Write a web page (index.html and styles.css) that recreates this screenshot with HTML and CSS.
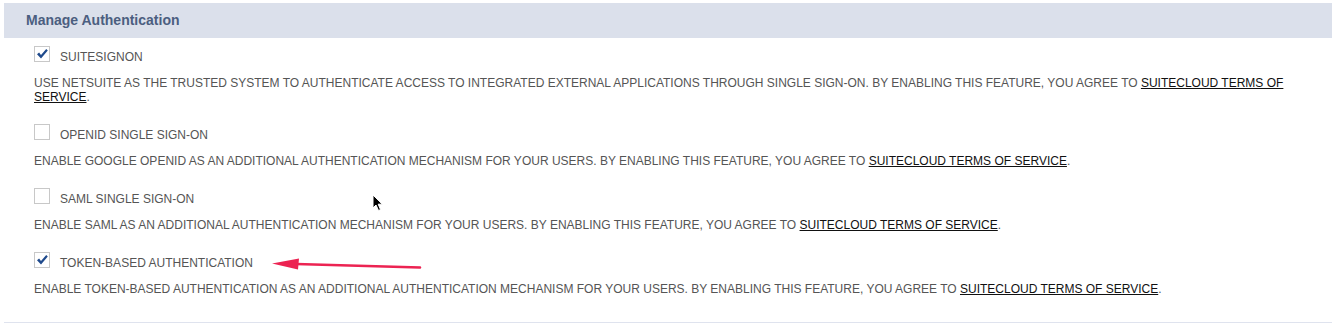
FILE: index.html
```html
<!DOCTYPE html>
<html>
<head>
<meta charset="utf-8">
<link rel="stylesheet" href="styles.css">
</head>
<body>
<div class="page">
  <div class="section-head">Manage Authentication</div>
  <div class="section-body">
    <div class="feature">
      <div class="feature-row">
        <span class="cb checked"><svg viewBox="0 0 16 16" width="16" height="16"><path d="M3 8.2 L5.1 6.5 L7 9 L12.2 3 L13.8 4.5 L7 12.4 Z" fill="#1f4a8c"/></svg></span>
        <span class="label">SUITESIGNON</span>
      </div>
      <p class="desc">USE NETSUITE AS THE TRUSTED SYSTEM TO AUTHENTICATE ACCESS TO INTEGRATED EXTERNAL APPLICATIONS THROUGH SINGLE SIGN-ON. BY ENABLING THIS FEATURE, YOU AGREE TO <a href="#">SUITECLOUD TERMS OF</a><br><a href="#">SERVICE</a>.</p>
    </div>
    <div class="feature">
      <div class="feature-row">
        <span class="cb"></span>
        <span class="label">OPENID SINGLE SIGN-ON</span>
      </div>
      <p class="desc">ENABLE GOOGLE OPENID AS AN ADDITIONAL AUTHENTICATION MECHANISM FOR YOUR USERS. BY ENABLING THIS FEATURE, YOU AGREE TO <a href="#">SUITECLOUD TERMS OF SERVICE</a>.</p>
    </div>
    <div class="feature">
      <div class="feature-row">
        <span class="cb"></span>
        <span class="label">SAML SINGLE SIGN-ON</span>
      </div>
      <p class="desc">ENABLE SAML AS AN ADDITIONAL AUTHENTICATION MECHANISM FOR YOUR USERS. BY ENABLING THIS FEATURE, YOU AGREE TO <a href="#">SUITECLOUD TERMS OF SERVICE</a>.</p>
    </div>
    <div class="feature">
      <div class="feature-row">
        <span class="cb checked"><svg viewBox="0 0 16 16" width="16" height="16"><path d="M3 8.2 L5.1 6.5 L7 9 L12.2 3 L13.8 4.5 L7 12.4 Z" fill="#1f4a8c"/></svg></span>
        <span class="label">TOKEN-BASED AUTHENTICATION</span>
      </div>
      <p class="desc">ENABLE TOKEN-BASED AUTHENTICATION AS AN ADDITIONAL AUTHENTICATION MECHANISM FOR YOUR USERS. BY ENABLING THIS FEATURE, YOU AGREE TO <a href="#">SUITECLOUD TERMS OF SERVICE</a>.</p>
    </div>
  </div>
  <div class="section-foot"></div>
</div>

<svg class="annot-arrow" width="160" height="20" viewBox="0 0 160 20">
  <path d="M24 10 L148 13.5" stroke="#ec2352" stroke-width="2.6" stroke-linecap="round" fill="none"/>
  <path d="M0 9.5 L27 4.5 L26 15.5 Z" fill="#ec2352"/>
</svg>

<svg class="cursor" width="12" height="18" viewBox="0 0 12 18">
  <path d="M1 1 L1 14 L4 11 L6.5 16.5 L8.5 15.6 L6.2 10.2 L10.3 10.2 Z" fill="#000" stroke="#fff" stroke-width="1"/>
</svg>
</body>
</html>
```

FILE: styles.css
```css
html, body {
  margin: 0;
  padding: 0;
  background: #ffffff;
}

body {
  position: relative;
  width: 1337px;
  height: 323px;
  overflow: hidden;
  font-family: "Liberation Sans", Arial, sans-serif;
}

.page {
  padding: 3px 5px 0 4px;
}

.section-head {
  height: 35px;
  line-height: 35px;
  background: #dbe0eb;
  color: #4b5e80;
  font-weight: bold;
  font-size: 14px;
  padding-left: 22px;
}

.section-body {
  padding: 8px 0 0 30px;
}

.feature {
  margin-bottom: 20px;
}

.feature:last-child {
  margin-bottom: 0;
}

.feature-row {
  display: flex;
  align-items: flex-start;
  height: 16px;
}

.cb {
  box-sizing: border-box;
  width: 16px;
  height: 16px;
  border: 1px solid #c8c8c8;
  background: #fff;
  display: flex;
  align-items: center;
  justify-content: center;
  flex: none;
}

.cb svg {
  display: block;
  margin: -1px;
}

.label {
  margin-left: 10px;
  padding-top: 3px;
  font-size: 12px;
  line-height: 16px;
  color: #555555;
}

.desc {
  margin: 14px 0 0 0;
  width: 1272px;
  font-size: 12px;
  line-height: 14px;
  color: #555555;
}

.desc a {
  color: #111111;
  text-decoration: underline;
}

.section-foot {
  margin-top: 26px;
  border-top: 1px solid #dfe3ee;
}

.annot-arrow {
  position: absolute;
  left: 272px;
  top: 254px;
}

.cursor {
  position: absolute;
  left: 372px;
  top: 194px;
}
```
